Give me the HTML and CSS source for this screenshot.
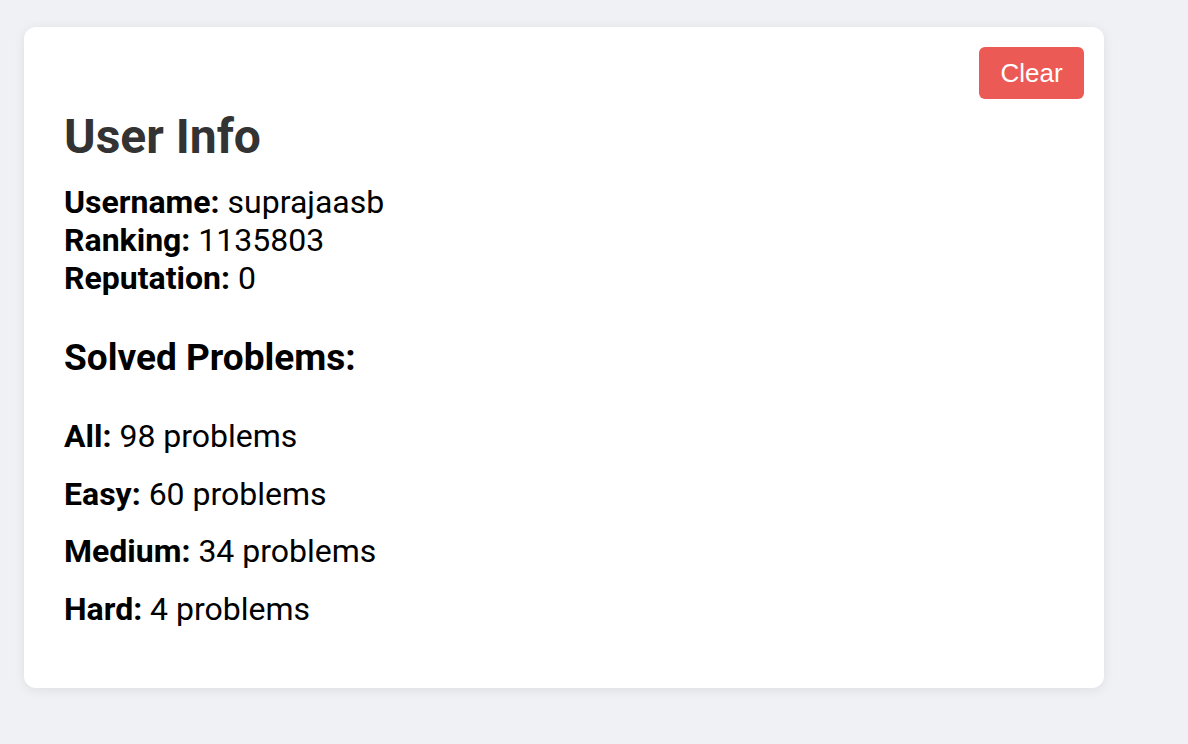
FILE: index.html
```html
<!DOCTYPE html>
<html lang="en">
<head>
<meta charset="utf-8">
<title>User Info</title>
<link rel="stylesheet" href="styles.css">
</head>
<body>
  <main class="page">
    <section class="card">
      <div class="toolbar">
        <button class="btn-clear" type="button">Clear</button>
      </div>
      <div class="content">
        <h2 class="title">User Info</h2>
        <div class="info">
          <div class="info-row"><strong>Username:</strong> suprajaasb</div>
          <div class="info-row"><strong>Ranking:</strong> 1135803</div>
          <div class="info-row"><strong>Reputation:</strong> 0</div>
        </div>
        <h3 class="subtitle">Solved Problems:</h3>
        <div class="stats">
          <p class="stat"><strong>All:</strong> 98 problems</p>
          <p class="stat"><strong>Easy:</strong> 60 problems</p>
          <p class="stat"><strong>Medium:</strong> 34 problems</p>
          <p class="stat"><strong>Hard:</strong> 4 problems</p>
        </div>
      </div>
    </section>
  </main>
</body>
</html>
```

FILE: styles.css
```css
html, body {
  margin: 0;
  padding: 0;
  background: #f0f1f5;
}

body {
  font-family: Roboto, "Noto Sans", sans-serif;
  color: #000;
  width: 1188px;
  height: 744px;
  overflow: hidden;
}

.page {
  padding: 27px 0 0 24px;
}

.card {
  box-sizing: border-box;
  width: 1080px;
  height: 661px;
  background: #fff;
  border-radius: 12px;
  box-shadow: 0 2px 12px rgba(0, 0, 0, 0.08);
  padding: 20px 20px 0 40px;
}

.toolbar {
  display: flex;
  justify-content: flex-end;
}

.btn-clear {
  width: 105px;
  height: 52px;
  border: none;
  border-radius: 6px;
  background: #eb5a55;
  color: #fff;
  font-family: "Liberation Sans", Arial, sans-serif;
  font-size: 26px;
  padding: 0;
  cursor: pointer;
}

.content {
  margin-top: 10px;
}

.title {
  margin: 0;
  font-size: 48px;
  font-weight: 700;
  line-height: 56px;
  color: #333;
}

.info {
  margin-top: 18px;
  font-size: 32px;
  line-height: 38px;
}

.subtitle {
  margin: 39px 0 0;
  font-size: 37px;
  font-weight: 700;
  line-height: 44px;
}

.stats {
  margin-top: 37px;
  font-size: 32px;
  line-height: 38px;
  display: flex;
  flex-direction: column;
  gap: 19.7px;
}

.stat {
  margin: 0;
}
```
